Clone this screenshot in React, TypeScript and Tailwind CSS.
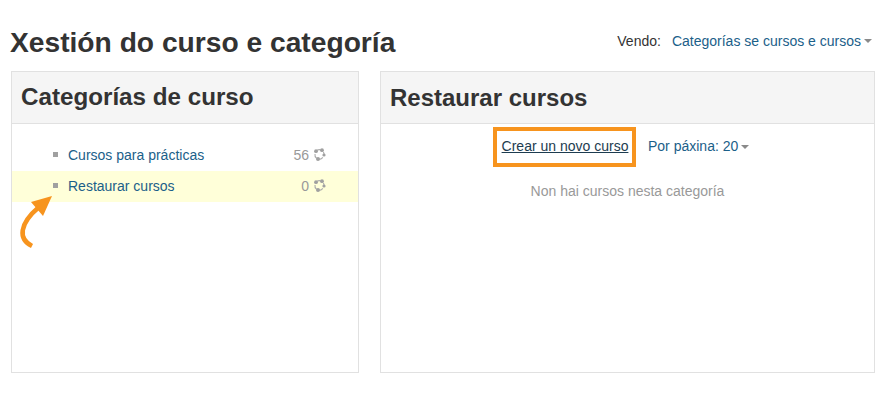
import React from 'react';

const Caret = () => (
  <span className="ml-[3px] inline-block h-0 w-0 border-x-[4px] border-t-[4px] border-x-transparent border-t-[#8a8a8a] align-middle" />
);

const Spinner = () => (
  <svg width="13" height="13" viewBox="0 0 13 13" className="ml-[4px] -mt-[2px]" fill="none">
    <path d="M3 3.2A4.6 4.6 0 0 1 8 2M10.4 4a4.6 4.6 0 0 1 .6 3M9.8 9.4a4.6 4.6 0 0 1-3.4 2M3.6 10.4A4.6 4.6 0 0 1 2 6" stroke="#aaa" strokeWidth="1.1" />
    <circle cx="3" cy="3.2" r="1.9" fill="#a0a0a0" />
    <circle cx="9" cy="2.2" r="1.9" fill="#a0a0a0" />
    <circle cx="11" cy="7" r="1.6" fill="#a0a0a0" />
    <circle cx="5" cy="11" r="2" fill="#a0a0a0" />
  </svg>
);

function CategoryRow({ name, count, active }: { name: string; count: number; active?: boolean }) {
  return (
    <div className={`flex h-[31px] items-center pl-[41px] pr-[32px] ${active ? 'bg-[#ffffd9]' : ''}`}>
      <span className="mr-[10px] -mt-[2px] h-[5px] w-[5px] bg-[#a0a0a0]" />
      <a className="flex-1 text-[#1b6089]">{name}</a>
      <span className="text-[#999]">{count}</span>
      <Spinner />
    </div>
  );
}

export default function App() {
  return (
    <div className="h-[402px] w-[886px] overflow-hidden bg-white px-[11px] pt-[25px] font-['Liberation_Sans',Arial,sans-serif] text-[14px] text-[#333]">
      <div className="flex h-[46px] items-start justify-between">
        <h1 className="-ml-px pt-px text-[28.2px] leading-[32px] font-bold text-[#333]">Xestión do curso e categoría</h1>
        <div className="flex items-center pt-[6px] pr-[3px] text-[14px] leading-[20px]">
          <span className="mr-[11px]">Vendo:</span>
          <a className="text-[#1b6089]">Categorías se cursos e cursos</a>
          <Caret />
        </div>
      </div>

      <div className="flex h-[302px] gap-[21px]">
        <section className="relative flex w-[348px] flex-col border border-[#e1e1e1]">
          <header className="flex h-[52px] items-center border-b border-[#e1e1e1] bg-[#f5f5f5] px-[9px]">
            <h2 className="text-[24.2px] font-bold">Categorías de curso</h2>
          </header>
          <div className="pt-[16px]">
            <CategoryRow name="Cursos para prácticas" count={56} />
            <CategoryRow name="Restaurar cursos" count={0} active />
          </div>
          <svg width="44" height="62" viewBox="0 0 44 62" className="absolute left-[2px] top-[118px]" fill="none">
            <path d="M18 56C4 49 5 34 25 17" stroke="#f7941e" strokeWidth="4.6" />
            <path d="M38 6L17 12L29 26Z" fill="#f7941e" />
          </svg>
        </section>

        <section className="flex w-[495px] flex-col border border-[#e1e1e1]">
          <header className="flex h-[52px] items-center border-b border-[#e1e1e1] bg-[#f5f5f5] px-[9px]">
            <h2 className="text-[24px] font-bold">Restaurar cursos</h2>
          </header>
          <div className="flex items-center pl-[112px] pt-[3px]">
            <a className="flex h-[40px] w-[143px] items-center justify-center border-[4px] border-[#f7941e] pb-[2px] pl-px text-[#1d3c50] underline">
              Crear un novo curso
            </a>
            <a className="ml-[12px] pb-[2px] text-[#1b6089]">Por páxina: 20</a>
            <Caret />
          </div>
          <p className="mt-[14px] text-center leading-[20px] text-[#999]">Non hai cursos nesta categoría</p>
        </section>
      </div>
    </div>
  );
}
